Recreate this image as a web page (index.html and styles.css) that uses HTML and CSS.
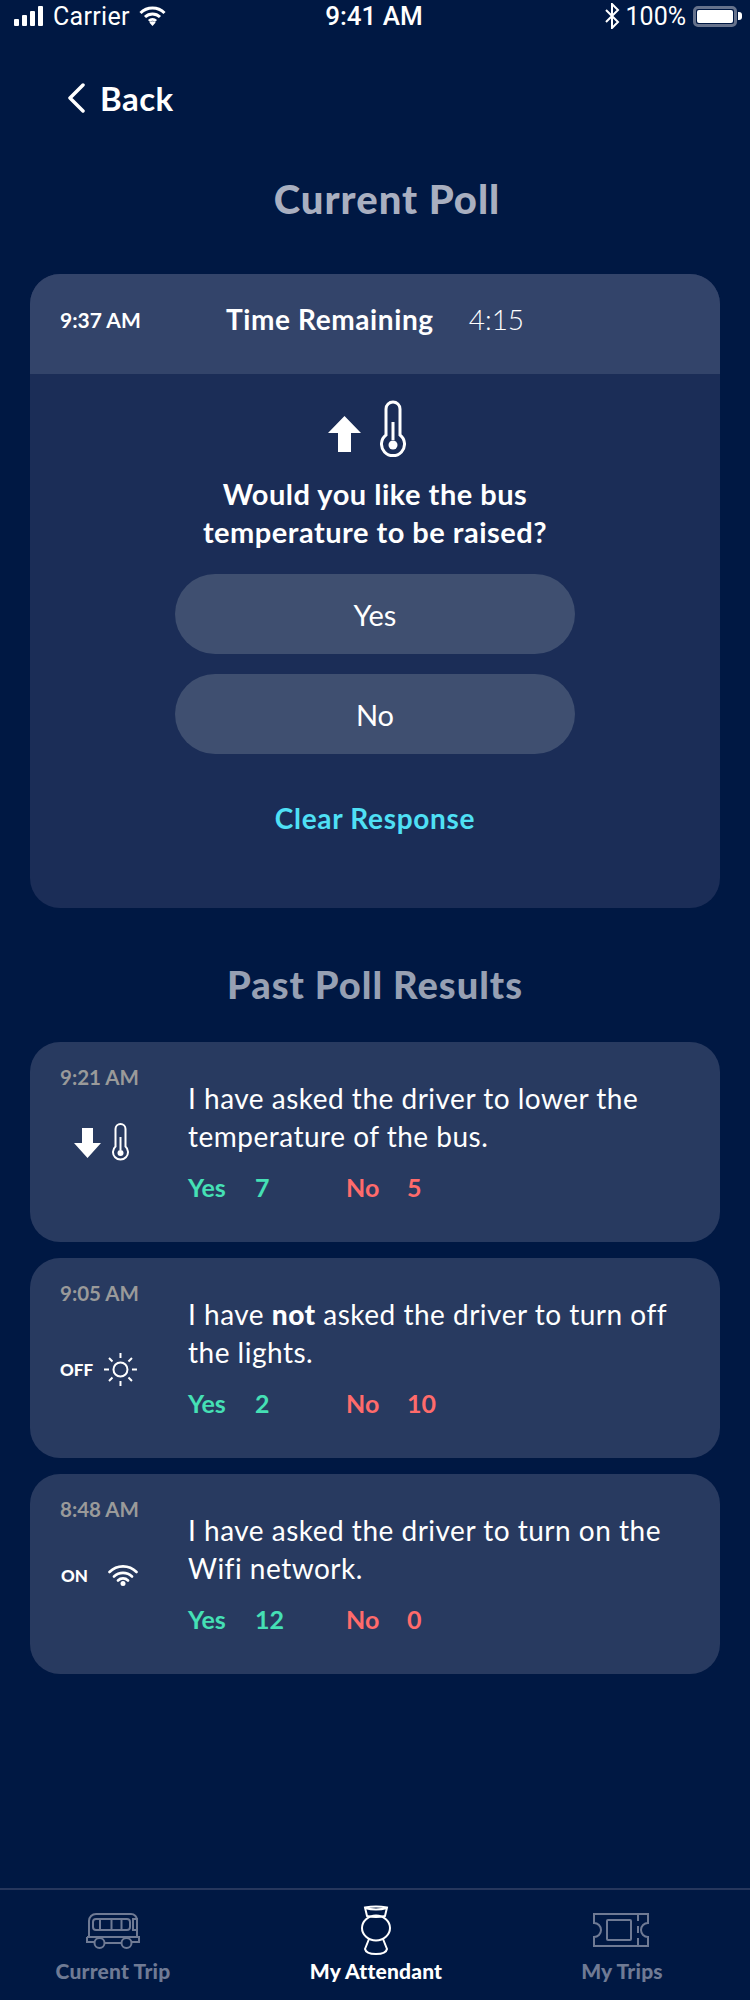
FILE: index.html
```html
<!doctype html>
<html lang="en">
<head>
    <meta charset="UTF-8">
    <title>My Attendant</title>
    <link rel="stylesheet" href="styles.css">
</head>
<body>
<div class="page">
    <div class="status-bar">
        <div class="status-left">
            <svg class="signal" width="30" height="20" viewBox="0 0 30 20"><rect x="0" y="13" width="5" height="7" rx="1"/><rect x="8" y="9" width="5" height="11" rx="1"/><rect x="16" y="5" width="5" height="15" rx="1"/><rect x="24" y="0" width="5" height="20" rx="1"/></svg>
            <span class="carrier">Carrier</span>
            <svg width="27" height="20" viewBox="0 0 26 20"><path d="M1 7 A17 17 0 0 1 25 7 M5.500 11 A11 11 0 0 1 20.500 11 M9.500 15 A5 5 0 0 1 16.500 15" fill="none" stroke="#fff" stroke-width="3"/><path d="M13 20 L9.800 16.600 A5 5 0 0 1 16.200 16.600 Z" fill="#fff"/></svg>
        </div>
        <div class="status-time">9:41 AM</div>
        <div class="status-right">
            <svg width="16" height="26" viewBox="0 0 16 26"><path d="M2 7 L14 19 L8 25 L8 1 L14 7 L2 19" fill="none" stroke="#fff" stroke-width="2"/></svg>
            <span>100%</span>
            <div class="battery"><div class="battery-fill"></div></div>
            <div class="battery-cap"></div>
        </div>
    </div>

    <div class="back">
        <svg width="18" height="30" viewBox="0 0 18 30"><path d="M16 2 L3 15 L16 28" fill="none" stroke="#fff" stroke-width="3.500" stroke-linecap="round" stroke-linejoin="round"/></svg>
        <span>Back</span>
    </div>

    <h1 class="title-current">Current Poll</h1>

    <div class="poll-card">
        <div class="poll-head">
            <span class="poll-time">9:37 AM</span>
            <span class="poll-label">Time Remaining</span>
            <span class="poll-count">4:15</span>
        </div>
        <div class="poll-body">
            <div class="poll-icons">
                <svg class="arrow-up" width="33" height="36" viewBox="0 0 33 36"><path d="M16.500 0 L33 17 L23 17 L23 36 L10 36 L10 17 L0 17 Z" fill="#fff"/></svg>
                <svg width="26" height="59" viewBox="0 0 26 59"><path d="M6 35 L6 9 A7 7 0 0 1 20 9 L20 35 A11.500 11.500 0 1 1 6 35 Z" fill="none" stroke="#fff" stroke-width="3"/><path d="M13 22 L13 40" stroke="#fff" stroke-width="3"/><circle cx="13" cy="45" r="4.500" fill="#fff"/></svg>
            </div>
            <p class="question">Would you like the bus<br>temperature to be raised?</p>
            <div class="answer">Yes</div>
            <div class="answer">No</div>
            <div class="clear">Clear Response</div>
        </div>
    </div>

    <h2 class="title-past">Past Poll Results</h2>

    <div class="result">
        <div class="result-left">
            <div class="result-time">9:21 AM</div>
            <div class="result-icons icons-temp">
                <svg width="27" height="30" viewBox="0 0 27 30"><path d="M13.500 30 L27 15 L19 15 L19 0 L8 0 L8 15 L0 15 Z" fill="#fff"/></svg>
                <svg width="17" height="40" viewBox="0 0 17 40"><path d="M3.500 23.500 L3.500 6 A5 5 0 0 1 13.500 6 L13.500 23.500 A7.500 7.500 0 1 1 3.500 23.500 Z" fill="none" stroke="#fff" stroke-width="2"/><path d="M8.500 14 L8.500 27" stroke="#fff" stroke-width="2"/><circle cx="8.500" cy="30" r="3" fill="#fff"/></svg>
            </div>
        </div>
        <div class="result-main">
            <p class="result-text">I have asked the driver to lower the temperature of the bus.</p>
            <div class="votes">
                <span class="yes-label">Yes</span><span class="yes-num">7</span>
                <span class="no-label">No</span><span class="no-num">5</span>
            </div>
        </div>
    </div>

    <div class="result">
        <div class="result-left">
            <div class="result-time">9:05 AM</div>
            <div class="result-icons icons-off">
                <span class="state">OFF</span>
                <svg width="33" height="33" viewBox="0 0 33 33" fill="none" stroke="#fff" stroke-width="2"><circle cx="16.500" cy="16.500" r="7"/><path d="M16.500 0 V5 M16.500 28 V33 M0 16.500 H5 M28 16.500 H33 M5 5 L8.500 8.500 M24.500 24.500 L28 28 M5 28 L8.500 24.500 M24.500 8.500 L28 5"/></svg>
            </div>
        </div>
        <div class="result-main">
            <p class="result-text">I have <b>not</b> asked the driver to turn off the lights.</p>
            <div class="votes">
                <span class="yes-label">Yes</span><span class="yes-num">2</span>
                <span class="no-label">No</span><span class="no-num">10</span>
            </div>
        </div>
    </div>

    <div class="result">
        <div class="result-left">
            <div class="result-time">8:48 AM</div>
            <div class="result-icons icons-on">
                <span class="state">ON</span>
                <svg width="30" height="22" viewBox="0 0 30 22" fill="none" stroke="#fff" stroke-width="2.600" stroke-linecap="round"><path d="M1.500 8 A19 19 0 0 1 28.500 8 M6 12.500 A13 13 0 0 1 24 12.500 M10 16.500 A7 7 0 0 1 20 16.500"/><circle cx="15" cy="19.500" r="2.500" fill="#fff" stroke="none"/></svg>
            </div>
        </div>
        <div class="result-main">
            <p class="result-text">I have asked the driver to turn on the Wifi network.</p>
            <div class="votes">
                <span class="yes-label">Yes</span><span class="yes-num">12</span>
                <span class="no-label">No</span><span class="no-num">0</span>
            </div>
        </div>
    </div>

    <div class="tabs">
        <div class="tab">
            <svg width="54" height="36" viewBox="0 0 54 36" fill="none" stroke="#6f7a94" stroke-width="2"><path d="M3 24 V8 A7 7 0 0 1 10 1 H45 A6 6 0 0 1 51 7 V24"/><rect x="7" y="6" width="37" height="11" rx="3"/><path d="M14 6 V17 M25.500 6 V17 M35.500 6 V17"/><path d="M47 6 H51 V17 H47 Z"/><path d="M1 24 H53 V29 H46 M8 29 H1 V24 M18 30 H36"/><circle cx="13.500" cy="30" r="5" fill="#001843"/><circle cx="40.500" cy="30" r="5" fill="#001843"/></svg>
            <span>Current Trip</span>
        </div>
        <div class="tab tab-active">
            <svg width="30" height="50" viewBox="0 0 30 50" fill="none" stroke="#fff" stroke-width="2"><path d="M4 2.500 Q15 0.500 26 2.500 L24 11 Q15 13 6 11 Z"/><path d="M4 3 Q15 6 26 3"/><ellipse cx="15" cy="23" rx="14" ry="12.500"/><path d="M8 34 L4 44 Q5 49 15 49 Q25 49 26 44 L22 34"/></svg>
            <span>My Attendant</span>
        </div>
        <div class="tab">
            <svg class="ticket" width="56" height="34" viewBox="0 0 56 34" fill="none" stroke="#6f7a94" stroke-width="2"><path d="M1 1 H55 V10 A7 7 0 0 0 55 24 V33 H1 V24 A7 7 0 0 0 1 10 Z"/><rect x="14" y="7" width="24" height="20" rx="1"/><path d="M45 2 V8 M45 13 V20 M45 25 V32"/></svg>
            <span>My Trips</span>
        </div>
    </div>
</div>
</body>
</html>
```

FILE: styles.css
```css
* {
    padding: 0;
    margin: 0;
    box-sizing: border-box;
}

html, body {
    background-color: #001843;
}

body {
    width: 750px;
    height: 2000px;
    overflow: hidden;
    font-family: "Lato", "Noto Sans", sans-serif;
    color: #fff;
}

.page {
    display: flex;
    flex-direction: column;
    height: 2000px;
}

/* status bar */
.status-bar {
    display: grid;
    grid-template-columns: 1fr auto 1fr;
    align-items: center;
    height: 32px;
    padding: 0 8px 0 14px;
    font-family: "Roboto", sans-serif;
    font-size: 25px;
}

.status-left {
    display: flex;
    align-items: center;
    gap: 9px;
}

.signal {
    fill: #fff;
}

.carrier {
    letter-spacing: 0.3px;
}

.status-time {
    margin-right: 8px;
    font-weight: 500;
    font-size: 26px;
}

.status-right {
    display: flex;
    align-items: center;
    justify-content: flex-end;
}

.status-right span {
    margin: 0 7px 0 6px;
}

.battery {
    width: 44px;
    height: 21px;
    border: 3px solid #66728c;
    border-radius: 5px;
    padding: 1px;
}

.battery-fill {
    width: 100%;
    height: 100%;
    background-color: #fff;
    border-radius: 2px;
}

.battery-cap {
    width: 4px;
    height: 8px;
    margin-left: 1px;
    background-color: #fff;
    border-radius: 0 3px 3px 0;
}

/* back + titles */
.back {
    display: flex;
    align-items: center;
    gap: 15px;
    margin: 49px 0 0 67px;
    height: 34px;
    font-size: 33px;
    font-weight: 700;
    letter-spacing: 0.5px;
}

.title-current {
    margin: 60px 0 0 0;
    padding-left: 24px;
    text-align: center;
    line-height: 48px;
    font-size: 40px;
    font-weight: 900;
    letter-spacing: 1px;
    color: #a9afc0;
}

.title-past {
    margin: 52px 0 34px 0;
    text-align: center;
    line-height: 48px;
    font-size: 38px;
    font-weight: 900;
    letter-spacing: 1px;
    color: #97a0b3;
}

/* current poll card */
.poll-card {
    margin: 51px 30px 0 30px;
    height: 634px;
    border-radius: 30px;
    overflow: hidden;
    background-color: #1b2d57;
}

.poll-head {
    display: flex;
    align-items: center;
    height: 100px;
    padding: 0 30px 10px 30px;
    background-color: #33446a;
}

.poll-time {
    width: 166px;
    font-size: 21px;
    font-weight: 700;
}

.poll-label {
    font-size: 28px;
    font-weight: 700;
    letter-spacing: 0.6px;
}

.poll-count {
    margin-left: 35px;
    font-size: 28px;
    font-weight: 300;
}

.poll-body {
    display: flex;
    flex-direction: column;
    align-items: center;
    padding: 26px 0 0 0;
}

.poll-icons {
    display: flex;
    align-items: flex-end;
    gap: 19px;
    height: 59px;
    padding-right: 16px;
}

.arrow-up {
    margin-bottom: 7px;
}

.question {
    margin-top: 16px;
    margin-bottom: 23px;
    text-align: center;
    font-size: 29px;
    font-weight: 700;
    letter-spacing: 0.5px;
    line-height: 38px;
}

.answer {
    display: flex;
    align-items: center;
    justify-content: center;
    width: 400px;
    height: 80px;
    margin-bottom: 20px;
    border-radius: 40px;
    background-color: #3f4f70;
    font-size: 29px;
}

.clear {
    margin-top: 27px;
    font-size: 28px;
    font-weight: 700;
    letter-spacing: 0.7px;
    color: #4fe0f5;
}

/* past results */
.result {
    display: flex;
    height: 200px;
    margin: 0 30px 16px 30px;
    padding: 22px 30px 0 30px;
    border-radius: 30px;
    background-color: #283a60;
}

.result-left {
    width: 128px;
    flex-shrink: 0;
}

.result-time {
    width: 79px;
    line-height: 26px;
    font-size: 20.500px;
    font-weight: 700;
    color: #9a9a9a;
}

.result-icons {
    display: flex;
    align-items: center;
    justify-content: center;
    gap: 11px;
    width: 79px;
    height: 40px;
    margin-top: 33px;
}

.icons-temp {
    padding-left: 3px;
}

.icons-off {
    margin-top: 43px;
    padding-right: 2px;
}

.icons-on {
    gap: 20px;
}

.state {
    font-size: 17px;
    font-weight: 900;
}

.result-main {
    flex: 1;
    padding-top: 15px;
}

.result-text {
    font-size: 28px;
    line-height: 38px;
    letter-spacing: 0.5px;
}

.result-text b {
    font-weight: 900;
}

.votes {
    display: flex;
    margin-top: 17px;
    line-height: 30px;
    font-size: 25px;
    font-weight: 700;
}

.yes-label,
.yes-num {
    color: #45e0b5;
}

.no-label,
.no-num {
    color: #ff6b6b;
}

.yes-label {
    width: 67px;
}

.yes-num {
    width: 91px;
}

.no-label {
    width: 61px;
}

/* tab bar */
.tabs {
    display: grid;
    grid-template-columns: 226px 300px 192px;
    margin-top: auto;
    height: 112px;
    border-top: 2px solid #26365c;
}

.tab {
    display: flex;
    flex-direction: column;
    align-items: center;
    justify-content: flex-end;
    padding-bottom: 17px;
    font-size: 21px;
    font-weight: 900;
    letter-spacing: 0.2px;
    color: #6f7a94;
}

.tab svg {
    margin-bottom: 9px;
}

.tab .ticket {
    margin: 0 2px 11px 0;
}

.tab-active {
    color: #fff;
}

.tab-active svg {
    margin-bottom: 3px;
}
```
